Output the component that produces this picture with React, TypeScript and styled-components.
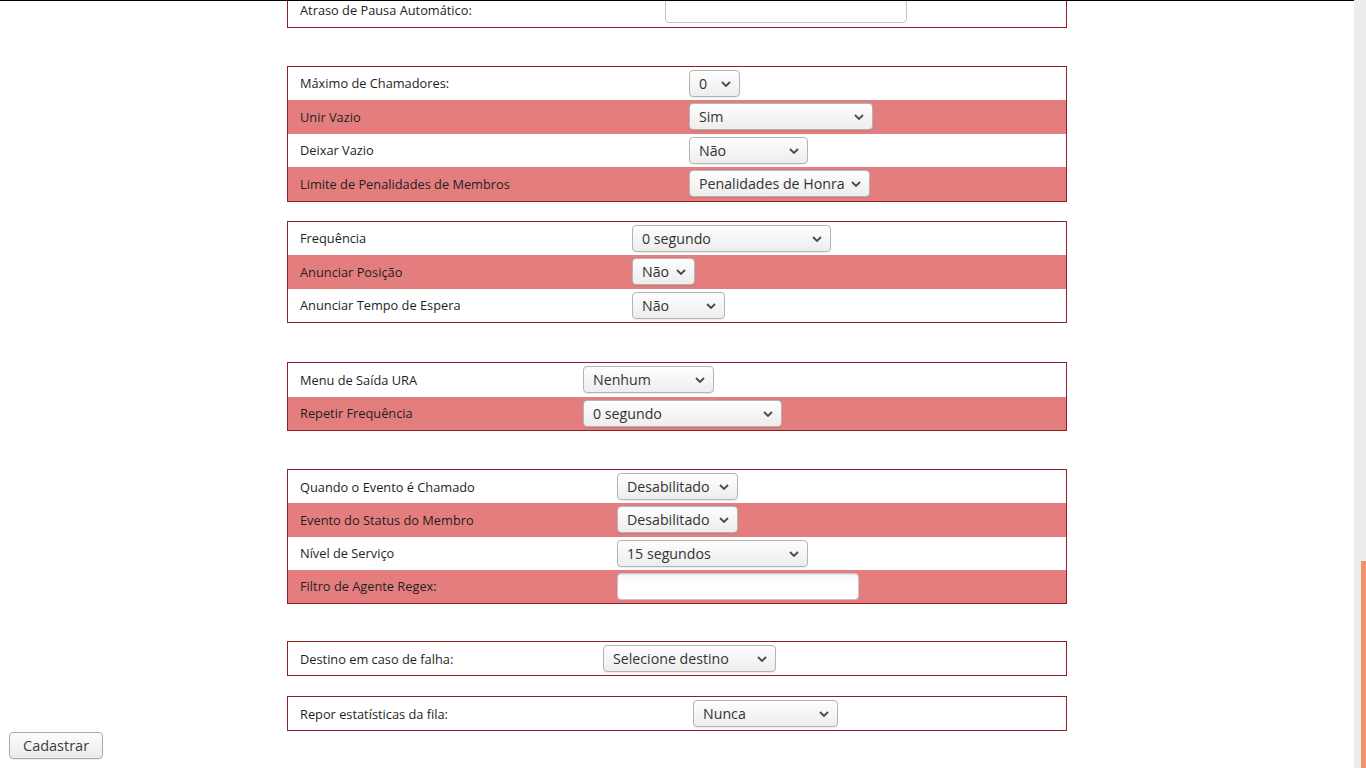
import React from "react";
import styled, { createGlobalStyle } from "styled-components";

const GlobalStyle = createGlobalStyle`
  html, body {
    margin: 0;
    padding: 0;
    height: 100%;
    overflow: hidden;
    background: #ffffff;
  }
  #root { height: 100%; }
  * { box-sizing: border-box; }
`;

const Frame = styled.div`
  display: flex;
  width: 100vw;
  height: 100vh;
`;

const Viewport = styled.main`
  flex: 1;
  min-width: 0;
  border-top: 1px solid #000;
  overflow: hidden;
  display: flex;
  flex-direction: column;
  justify-content: flex-end;
  padding-bottom: 9px;
  font-family: "Open Sans", "Noto Sans", "DejaVu Sans", sans-serif;
`;

const ScrollTrack = styled.div`
  width: 12px;
  flex: none;
  background: #efedeb;
  display: flex;
  flex-direction: column;
  justify-content: flex-end;
  align-items: flex-end;
`;

const ScrollThumb = styled.div`
  width: 5px;
  height: 207px;
  background: #f0926b;
`;

const Table = styled.section<{ $gap: number }>`
  flex: none;
  width: 780px;
  margin: ${(p) => p.$gap}px auto 0;
  border: 1px solid #8e1f23;
  display: flex;
  flex-direction: column;
`;

const Row = styled.div<{ $label: number; $alt: boolean; $h: number }>`
  display: grid;
  grid-template-columns: ${(p) => p.$label}px 1fr;
  align-items: center;
  height: ${(p) => p.$h}px;
  background: ${(p) => (p.$alt ? "#e47e7e" : "#ffffff")};
`;

const Label = styled.span`
  padding-left: 12px;
  font-size: 12.8px;
  color: #1e1e1e;
  white-space: nowrap;
`;

const SelectWrap = styled.div<{ $w: number }>`
  position: relative;
  width: ${(p) => p.$w}px;
  height: 27px;
`;

const NativeSelect = styled.select`
  appearance: none;
  -webkit-appearance: none;
  width: 100%;
  height: 100%;
  margin: 0;
  padding: 0 22px 0 9px;
  border: 1px solid #b4b4b4;
  border-radius: 4px;
  background: linear-gradient(#fefefe, #ededed);
  box-shadow: 0 1px 1px rgba(0, 0, 0, 0.08);
  font-family: "Open Sans", "Noto Sans", "DejaVu Sans", sans-serif;
  font-size: 14.2px;
  color: #333;
  outline: none;
`;

const Chevron = styled.svg`
  position: absolute;
  right: 9px;
  top: 11px;
  width: 10px;
  height: 6px;
  pointer-events: none;
`;

const TextInput = styled.input<{ $w: number }>`
  width: ${(p) => p.$w}px;
  height: 27px;
  margin: 0;
  border: 1px solid #c4c4c4;
  border-radius: 4px;
  background: linear-gradient(#f6f6f6, #ffffff 40%);
  box-shadow: inset 0 1px 1px rgba(0, 0, 0, 0.06);
  outline: none;
`;

const ButtonRow = styled.div`
  flex: none;
  margin-top: 1px;
  padding-left: 9px;
`;

const SubmitButton = styled.button`
  height: 27px;
  padding: 0 13px;
  border: 1px solid #ababab;
  border-radius: 4px;
  background: linear-gradient(#fdfdfd, #ebebeb);
  box-shadow: 0 1px 1px rgba(0, 0, 0, 0.08);
  font-family: "Open Sans", "Noto Sans", "DejaVu Sans", sans-serif;
  font-size: 14.5px;
  color: #3c3c3c;
`;

type Field =
  | { label: string; kind: "select"; value: string; width: number }
  | { label: string; kind: "text"; width: number };

type Group = { gap: number; labelW: number; rowH: number; fields: Field[] };

const groups: Group[] = [
  {
    gap: 0,
    labelW: 377,
    rowH: 33.5,
    fields: [{ label: "Atraso de Pausa Automático:", kind: "text", width: 242 }],
  },
  {
    gap: 38,
    labelW: 401,
    rowH: 33.5,
    fields: [
      { label: "Máximo de Chamadores:", kind: "select", value: "0", width: 51 },
      { label: "Unir Vazio", kind: "select", value: "Sim", width: 184 },
      { label: "Deixar Vazio", kind: "select", value: "Não", width: 119 },
      {
        label: "Limite de Penalidades de Membros",
        kind: "select",
        value: "Penalidades de Honra",
        width: 181,
      },
    ],
  },
  {
    gap: 19,
    labelW: 344,
    rowH: 33.5,
    fields: [
      { label: "Frequência", kind: "select", value: "0 segundo", width: 199 },
      { label: "Anunciar Posição", kind: "select", value: "Não", width: 63 },
      { label: "Anunciar Tempo de Espera", kind: "select", value: "Não", width: 93 },
    ],
  },
  {
    gap: 39,
    labelW: 295,
    rowH: 33.5,
    fields: [
      { label: "Menu de Saída URA", kind: "select", value: "Nenhum", width: 131 },
      { label: "Repetir Frequência", kind: "select", value: "0 segundo", width: 199 },
    ],
  },
  {
    gap: 38,
    labelW: 329,
    rowH: 33.25,
    fields: [
      { label: "Quando o Evento é Chamado", kind: "select", value: "Desabilitado", width: 121 },
      { label: "Evento do Status do Membro", kind: "select", value: "Desabilitado", width: 121 },
      { label: "Nível de Serviço", kind: "select", value: "15 segundos", width: 191 },
      { label: "Filtro de Agente Regex:", kind: "text", width: 242 },
    ],
  },
  {
    gap: 37,
    labelW: 315,
    rowH: 33,
    fields: [
      { label: "Destino em caso de falha:", kind: "select", value: "Selecione destino", width: 173 },
    ],
  },
  {
    gap: 20,
    labelW: 405,
    rowH: 33,
    fields: [{ label: "Repor estatísticas da fila:", kind: "select", value: "Nunca", width: 145 }],
  },
];

function Select({ value, width }: { value: string; width: number }) {
  return (
    <SelectWrap $w={width}>
      <NativeSelect defaultValue={value}>
        <option value={value}>{value}</option>
      </NativeSelect>
      <Chevron viewBox="0 0 10 6">
        <path d="M1 1 L5 5 L9 1" fill="none" stroke="#4a4a4a" strokeWidth="1.8" />
      </Chevron>
    </SelectWrap>
  );
}

export default function App() {
  return (
    <>
      <GlobalStyle />
      <Frame>
        <Viewport>
          {groups.map((g, gi) => (
            <Table key={gi} $gap={g.gap}>
              {g.fields.map((f, fi) => (
                <Row key={fi} $label={g.labelW} $alt={fi % 2 === 1} $h={g.rowH}>
                  <Label>{f.label}</Label>
                  <div>
                    {f.kind === "select" ? (
                      <Select value={f.value} width={f.width} />
                    ) : (
                      <TextInput type="text" $w={f.width} />
                    )}
                  </div>
                </Row>
              ))}
            </Table>
          ))}
          <ButtonRow>
            <SubmitButton type="button">Cadastrar</SubmitButton>
          </ButtonRow>
        </Viewport>
        <ScrollTrack>
          <ScrollThumb />
        </ScrollTrack>
      </Frame>
    </>
  );
}
